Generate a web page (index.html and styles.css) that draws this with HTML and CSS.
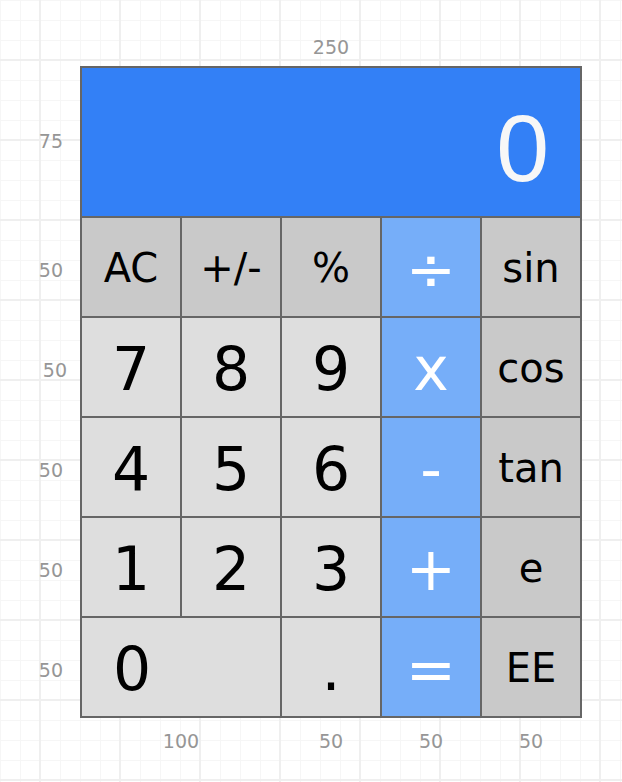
FILE: index.html
```html
<!DOCTYPE html>
<html lang="en">
<head>
<meta charset="utf-8">
<title>Calculator</title>
<link rel="stylesheet" href="styles.css">
</head>
<body>
  <div class="page">
    <div class="corner"></div>
    <div class="dim dim-top">250</div>

    <div class="side-labels">
      <div class="dim dim-side dim-display">75</div>
      <div class="dim dim-side">50</div>
      <div class="dim dim-side dim-shift">50</div>
      <div class="dim dim-side">50</div>
      <div class="dim dim-side">50</div>
      <div class="dim dim-side">50</div>
    </div>

    <div class="calc">
      <div class="display">0</div>

      <div class="key fn">AC</div>
      <div class="key fn">+/-</div>
      <div class="key fn">%</div>
      <div class="key op">÷</div>
      <div class="key sci">sin</div>

      <div class="key num">7</div>
      <div class="key num">8</div>
      <div class="key num">9</div>
      <div class="key op">x</div>
      <div class="key sci">cos</div>

      <div class="key num">4</div>
      <div class="key num">5</div>
      <div class="key num">6</div>
      <div class="key op">-</div>
      <div class="key sci">tan</div>

      <div class="key num">1</div>
      <div class="key num">2</div>
      <div class="key num">3</div>
      <div class="key op">+</div>
      <div class="key sci">e</div>

      <div class="key num zero">0</div>
      <div class="key num">.</div>
      <div class="key op">=</div>
      <div class="key sci">EE</div>
    </div>

    <div class="corner"></div>
    <div class="bottom-labels">
      <div class="dim dim-bottom wide">100</div>
      <div class="dim dim-bottom">50</div>
      <div class="dim dim-bottom">50</div>
      <div class="dim dim-bottom">50</div>
    </div>
  </div>
</body>
</html>
```

FILE: styles.css
```css
html, body {
  margin: 0;
  padding: 0;
}

body {
  width: 622px;
  height: 782px;
  overflow: hidden;
  background-color: #ffffff;
  background-image:
    linear-gradient(to right, transparent 39px, #efefef 39px, #efefef 41px, transparent 41px),
    linear-gradient(to bottom, transparent 59px, #efefef 59px, #efefef 61px, transparent 61px),
    linear-gradient(to right, #f6f6f6 1px, transparent 1px),
    linear-gradient(to bottom, #f6f6f6 1px, transparent 1px);
  background-size: 80px 80px, 80px 80px, 20px 20px, 20px 20px;
  background-position: 0 0, 0 0, 0 0, 0 0;
  font-family: "DejaVu Sans", Verdana, sans-serif;
}

.page {
  display: grid;
  grid-template-columns: 80px 502px;
  grid-template-rows: 66px 652px 64px;
}

.dim {
  color: #969696;
  font-size: 19px;
  font-family: "DejaVu Sans", Verdana, sans-serif;
}

.dim-top {
  display: flex;
  justify-content: center;
  align-items: flex-start;
  padding-top: 36px;
  line-height: 22px;
}

.side-labels {
  display: grid;
  grid-template-rows: 150px repeat(5, 100px);
}

.dim-side {
  display: flex;
  align-items: center;
  justify-content: flex-end;
  padding-right: 17px;
  padding-top: 7px;
}

.dim-side.dim-display {
  padding-top: 0;
}

.dim-side.dim-shift {
  padding-right: 13px;
}

.bottom-labels {
  display: grid;
  grid-template-columns: 200px 100px 100px 100px;
  padding-top: 12px;
}

.dim-bottom {
  text-align: center;
  line-height: 22px;
  padding-left: 2px;
}

.calc {
  display: grid;
  grid-template-columns: repeat(5, 98px);
  grid-template-rows: 148px repeat(5, 98px);
  gap: 2px;
  padding: 2px;
  background: #666666;
}

.display {
  grid-column: 1 / -1;
  background: #3380f6;
  color: #f7f7f7;
  font-family: "Liberation Sans", Arial, sans-serif;
  font-size: 95px;
  display: flex;
  align-items: center;
  justify-content: flex-end;
  padding-right: 31px;
  padding-top: 12px;
}

.key {
  display: flex;
  align-items: center;
  justify-content: center;
  color: #000000;
  font-size: 40px;
  padding-top: 2px;
}

.fn {
  background: #c9c9c9;
}

.sci {
  background: #c9c9c9;
}

.num {
  background: #dedede;
  font-size: 60px;
  padding-top: 3px;
}

.op {
  background: #76aef9;
  color: #ffffff;
  font-size: 60px;
  padding-top: 3px;
}

.zero {
  grid-column: span 2;
  justify-content: flex-start;
  padding-left: 31px;
}
```
